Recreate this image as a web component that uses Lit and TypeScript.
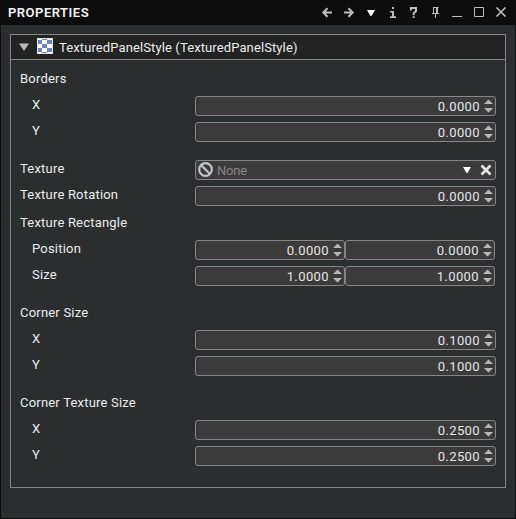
import { LitElement, html, css, svg } from "lit";
import { customElement } from "lit/decorators.js";

type Row = { label: string; indent?: boolean; values?: string[]; asset?: boolean; gap?: "large" | "small" };

const ROWS: Row[] = [
  { label: "Borders" },
  { label: "X", indent: true, values: ["0.0000"] },
  { label: "Y", indent: true, values: ["0.0000"] },
  { label: "Texture", asset: true, gap: "large" },
  { label: "Texture Rotation", values: ["0.0000"] },
  { label: "Texture Rectangle", gap: "small" },
  { label: "Position", indent: true, values: ["0.0000", "0.0000"] },
  { label: "Size", indent: true, values: ["1.0000", "1.0000"] },
  { label: "Corner Size", gap: "large" },
  { label: "X", indent: true, values: ["0.1000"] },
  { label: "Y", indent: true, values: ["0.1000"] },
  { label: "Corner Texture Size", gap: "large" },
  { label: "X", indent: true, values: ["0.2500"] },
  { label: "Y", indent: true, values: ["0.2500"] },
];

const stroke = (d: string, w = 2) => svg`<path d=${d} fill="none" stroke="#bebebe" stroke-width=${w} />`;
const TOOLS = [
  stroke("M12.5 3.3L8.3 7.5L12.5 11.7M8.5 7.5H17"),
  stroke("M11.5 3.3L15.7 7.5L11.5 11.7M7 7.5H15.5"),
  svg`<path d="M8 5H16L12.5 11H11.5Z" fill="#fff" />`,
  svg`<path d="M11 2h2v2h-2zM9 6h4v5.2h2V13H9v-1.8h2V7.6H9z" fill="#bebebe" />`,
  stroke("M8 5.5V3H13V6.3L10.7 8.2V10.2M10.7 11.2V13"),
  svg`<path d="M8 2.5H13.5M8.5 2.5V8M7 8.5H14M10.5 9V13" fill="none" stroke="#bebebe" /><path d="M11 2h2v6h-2z" fill="#bebebe" />`,
  svg`<path d="M5 11.5H15" fill="none" stroke="#bebebe" />`,
  svg`<path d="M5.5 2.5H14.5V11.5H5.5Z" fill="none" stroke="#bebebe" />`,
  stroke("M5.5 2.5L14.5 11.5M14.5 2.5L5.5 11.5", 1.6),
];

@customElement("number-field")
class NumberField extends LitElement {
  static properties = { value: {} };
  declare value: string;
  static styles = css`
    :host { display: flex; flex: 1; box-sizing: border-box; height: 20px; border: 1px solid #858585; border-radius: 3px; background: #3c3b3b; justify-content: flex-end; }
    .value { font: 13px/19px Roboto, sans-serif; letter-spacing: 0.4px; color: #e6e6e6; }
    .spin { display: block; width: 15px; height: 18px; }
  `;
  render() {
    return html`<span class="value">${this.value}</span>
      <svg class="spin" viewBox="0 0 15 18"><path d="M4 7L8.5 2.5L13 7ZM4 11H13L8.5 15.5Z" fill="#b8b8b8" /></svg>`;
  }
}

@customElement("app-root")
class AppRoot extends LitElement {
  static styles = css`
    :host { display: flex; flex-direction: column; box-sizing: border-box; width: 516px; height: 519px; padding: 0 1px 1px; background: #0d0d0d; font: 13px/18px Roboto, sans-serif; color: #ececec; }
    .titlebar { display: flex; height: 25px; justify-content: space-between; }
    .title { padding-left: 7px; line-height: 25px; font-weight: 600; letter-spacing: 0.5px; color: #f2f2f2; }
    .tools { display: flex; padding: 5px 2px 0 0; }
    .tool { display: block; width: 22px; height: 16px; }
    .body { flex: 1; box-sizing: border-box; padding: 9px 9px 30px; background: #2b2e2f; }
    .group { box-sizing: border-box; width: 496px; height: 454px; border: 1px solid #858585; }
    .header { display: flex; height: 24px; align-items: center; background: #222; border-bottom: 1px solid #858585; }
    .arrow { width: 10px; height: 8px; margin: 0 8px; }
    .texture { width: 16px; height: 16px; margin-top: -2px; }
    .name { padding-left: 6px; padding-top: 2px; letter-spacing: 0.11px; }
    .rows { padding: 10px 9px 0; }
    .row { display: flex; height: 26px; align-items: flex-start; }
    .large { margin-top: 12px; }
    .small { margin-top: 2px; }
    .label { width: 175px; box-sizing: border-box; letter-spacing: 0.2px; white-space: nowrap; }
    .indent { padding-left: 12px; }
    .fields { display: flex; width: 301px; }
    .pair { width: 300px; }
    .asset { display: flex; flex: 1; box-sizing: border-box; height: 20px; border: 1px solid #858585; border-radius: 3px; background: #3c3b3b; align-items: flex-start; }
    .none { flex: 1; padding-left: 4px; font: 13px/20px Roboto, sans-serif; letter-spacing: -0.2px; color: #858585; }
    .ban { width: 16px; height: 16px; margin: 1px 0 0 1px; }
    .actions { width: 34px; height: 18px; }
  `;

  private control(row: Row) {
    if (row.asset) {
      return html`<div class="asset">
        <svg class="ban" viewBox="0 0 16 16"><circle cx="8.5" cy="7.5" r="6.3" fill="none" stroke="#c3c5cc" stroke-width="2.2" /><path d="M4 3L13 12" stroke="#c3c5cc" stroke-width="2.2" /></svg>
        <span class="none">None</span>
        <svg class="actions" viewBox="0 0 34 18"><path d="M2 6H10L6.5 12H5.5Z" fill="#fff" /><path d="M20.5 4.5L29.5 13.5M29.5 4.5L20.5 13.5" stroke="#e6e6e6" stroke-width="2.7" /></svg>
      </div>`;
    }
    return row.values?.map((v) => html`<number-field .value=${v}></number-field>`);
  }

  render() {
    return html`
      <div class="titlebar">
        <span class="title">PROPERTIES</span>
        <div class="tools">${TOOLS.map((t) => html`<svg class="tool" viewBox="0 0 22 16">${t}</svg>`)}</div>
      </div>
      <div class="body">
        <div class="group">
          <div class="header">
            <svg class="arrow" viewBox="0 0 10 8"><path d="M0 0.5H10L5 8Z" fill="#b8b8b8" /></svg>
            <svg class="texture" viewBox="0 0 16 16"><path d="M0 0H16V16H0Z" fill="#e4e2de" /><path d="M1 1H15V15H1Z" fill="#fff" />
              <path d="M1 2H5V6H1ZM10 2H15V6H10ZM5 1H10V2H5ZM5 6H10V10H5ZM1 10H5V14H1ZM10 10H15V14H10ZM5 14H10V15H5Z" fill="#6685c1" />
            </svg>
            <span class="name">TexturedPanelStyle (TexturedPanelStyle)</span>
          </div>
          <div class="rows">
            ${ROWS.map((row) => html`<div class="row ${row.gap ?? ""}">
              <span class="label ${row.indent ? "indent" : ""}">${row.label}</span>
              <div class="fields ${row.values?.length === 2 ? "pair" : ""}">${this.control(row)}</div>
            </div>`)}
          </div>
        </div>
      </div>`;
  }
}
